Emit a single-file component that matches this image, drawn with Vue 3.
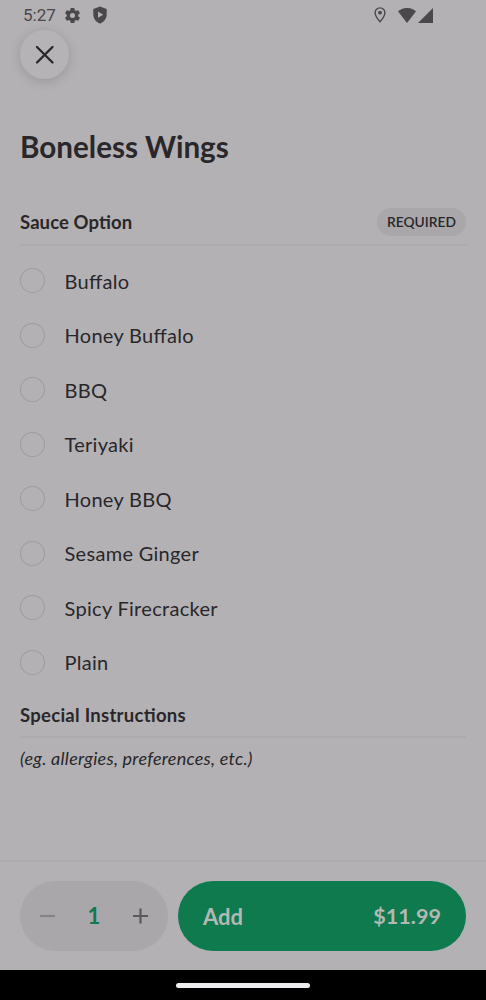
<template>
  <div class="screen">
    <!-- Status bar -->
    <div class="status-bar">
      <div class="status-left">
        <span class="time">5:27</span>
        <svg class="gear" width="19" height="19" viewBox="0 0 24 24">
          <path fill="currentColor" fill-rule="evenodd" d="M19.14 12.94c.04-.3.06-.61.06-.94 0-.32-.02-.64-.07-.94l2.03-1.58c.18-.14.23-.41.12-.61l-1.92-3.32c-.12-.22-.37-.29-.59-.22l-2.39.96c-.5-.38-1.03-.7-1.62-.94l-.36-2.54c-.04-.24-.24-.41-.48-.41h-3.84c-.24 0-.43.17-.47.41l-.36 2.54c-.59.24-1.13.57-1.62.94l-2.39-.96c-.22-.08-.47 0-.59.22L2.74 8.87c-.12.21-.08.47.12.61l2.03 1.58c-.05.3-.09.63-.09.94s.02.64.07.94l-2.03 1.58c-.18.14-.23.41-.12.61l1.92 3.32c.12.22.37.29.59.22l2.39-.96c.5.38 1.03.7 1.62.94l.36 2.54c.05.24.24.41.48.41h3.84c.24 0 .44-.17.47-.41l.36-2.54c.59-.24 1.13-.56 1.62-.94l2.39.96c.22.08.47 0 .59-.22l1.92-3.32c.12-.22.07-.47-.12-.61l-2.01-1.58zM12 15.2A3.2 3.2 0 1 1 12 8.8a3.2 3.2 0 0 1 0 6.4z" />
        </svg>
        <svg class="shield" width="14" height="18" viewBox="0 0 14 18">
          <path fill="currentColor" fill-rule="evenodd" d="M7 .4 13.7 3v5.400c0 4-2.800 7.700-6.700 9-3.900-1.300-6.700-5-6.700-9V3zM5 5.600v6.200L10.200 8.700z" />
        </svg>
      </div>
      <div class="status-right">
        <svg class="pin" width="12" height="16" viewBox="0 0 12 16">
          <path fill="none" stroke="currentColor" stroke-width="1.4" d="M6 .9a4.900 4.900 0 0 0-4.900 4.900C1.100 9.300 6 14.700 6 14.700s4.900-5.400 4.900-8.900A4.900 4.900 0 0 0 6 .9z" />
          <circle cx="6" cy="5.700" r="1.900" fill="currentColor" />
        </svg>
        <svg class="wifi" width="18" height="15" viewBox="0 0 18 15">
          <path fill="currentColor" d="M0 3.200C5.200-1.100 12.800-1.100 18 3.200L9 15z" />
        </svg>
        <svg class="signal" width="15" height="15" viewBox="0 0 15 15">
          <path fill="currentColor" d="M15 0v15H0z" />
        </svg>
      </div>
    </div>

    <button class="close-btn" aria-label="Close">
      <svg width="20" height="20" viewBox="0 0 20 20">
        <path d="M2 2l15.500 15.500M17.500 2L2 17.500" fill="none" stroke="currentColor" stroke-width="2.300" stroke-linecap="round" />
      </svg>
    </button>

    <!-- Item details -->
    <main class="content">
      <h1 class="title">Boneless Wings</h1>

      <div class="section-header">
        <h2 class="section-title">Sauce Option</h2>
        <span class="required">REQUIRED</span>
      </div>

      <div class="options">
        <div
          v-for="option in options"
          :key="option"
          class="option"
          @click="selected = option"
        >
          <span class="radio" :class="{ checked: selected === option }"></span>
          <span class="option-label">{{ option }}</span>
        </div>
      </div>

      <h2 class="section-title instructions-title">Special Instructions</h2>
      <p class="instructions">(eg. allergies, preferences, etc.)</p>
    </main>

    <!-- Bottom bar -->
    <footer class="footer">
      <div class="stepper">
        <button class="step minus" :disabled="quantity === 1" aria-label="Decrease" @click="quantity--">
          <svg width="15" height="16" viewBox="0 0 15 16">
            <path d="M0 8h15" stroke="currentColor" stroke-width="2.200" />
          </svg>
        </button>
        <span class="quantity">{{ quantity }}</span>
        <button class="step plus" aria-label="Increase" @click="quantity++">
          <svg width="15" height="16" viewBox="0 0 15 16">
            <path d="M0 8h15M7.500 .5v15" stroke="currentColor" stroke-width="2.200" />
          </svg>
        </button>
      </div>
      <button class="add-btn">
        <span>Add</span>
        <span class="total">${{ total }}</span>
      </button>
    </footer>

    <div class="nav-bar">
      <div class="nav-handle"></div>
    </div>
  </div>
</template>

<script setup>
import { ref, computed } from 'vue'

const options = [
  'Buffalo',
  'Honey Buffalo',
  'BBQ',
  'Teriyaki',
  'Honey BBQ',
  'Sesame Ginger',
  'Spicy Firecracker',
  'Plain'
]

const price = 11.99
const selected = ref('')
const quantity = ref(1)

const total = computed(() => (price * quantity.value).toFixed(2))
</script>

<style>
body {
  margin: 0;
  background-color: #b3b1b4;
}
</style>

<style scoped>
.screen {
  display: flex;
  flex-direction: column;
  width: 486px;
  height: 1000px;
  overflow: hidden;
  background-color: #b3b1b4;
  color: #29272a;
  font-family: Lato, "Liberation Sans", sans-serif;
  /* keep ligatures where letter-spacing is set */
  font-feature-settings: "liga" 1;
}

button {
  border: none;
  padding: 0;
  font-family: inherit;
  cursor: pointer;
}

/* Status bar */
.status-bar {
  display: flex;
  justify-content: space-between;
  box-sizing: border-box;
  height: 30px;
  padding: 0 53px 0 23px;
  color: #4a484b;
}

.status-left,
.status-right {
  display: flex;
  align-items: center;
}

.time {
  width: 40px;
  font-family: Roboto, sans-serif;
  font-size: 17px;
  line-height: 31px;
}

.shield {
  margin-left: 11px;
}

.wifi {
  margin-left: 12px;
}

.signal {
  margin-left: 2px;
}

.close-btn {
  display: flex;
  align-items: center;
  justify-content: center;
  flex: none;
  width: 49px;
  height: 49px;
  margin-left: 20px;
  border-radius: 50%;
  background-color: #b5b3b6;
  color: #29272a;
  box-shadow: 0 2px 12px rgba(0, 0, 0, 0.16);
}

/* Content */
.content {
  flex: 1;
  padding: 48px 19px 0 20px;
}

.title {
  margin: 0;
  font-size: 29.6px;
  line-height: 39px;
  font-weight: 700;
}

.section-header {
  display: flex;
  align-items: center;
  justify-content: space-between;
  box-sizing: border-box;
  height: 46px;
  margin-top: 34px;
  border-bottom: 2px solid #adabae;
}

.section-title {
  margin: 0;
  font-size: 18.5px;
  line-height: 24px;
  font-weight: 700;
  letter-spacing: 0.1px;
}

.required {
  box-sizing: border-box;
  width: 89px;
  height: 28px;
  margin-right: 1px;
  border-radius: 14px;
  background-color: #a9a7aa;
  font-size: 13.800px;
  line-height: 28px;
  font-weight: 600;
  text-align: center;
}

.options {
  padding-top: 7.500px;
}

.option {
  display: flex;
  align-items: center;
  height: 54.5px;
  cursor: pointer;
}

.radio {
  box-sizing: border-box;
  width: 24.5px;
  height: 25px;
  border: 1.500px solid #9d9b9e;
  border-radius: 50%;
}

.radio.checked {
  border: 7px solid #0e7a4e;
}

.option-label {
  margin-left: 20px;
  font-size: 20px;
  line-height: 26px;
  letter-spacing: 0.3px;
}

.instructions-title {
  margin-right: 1px;
  padding: 13px 0 9px;
  border-bottom: 2px solid #adabae;
  letter-spacing: 0.28px;
}

.instructions {
  margin: 8px 0 0;
  font-size: 18px;
  line-height: 24px;
  font-style: italic;
  letter-spacing: 0.24px;
}

/* Footer */
.footer {
  display: flex;
  align-items: flex-start;
  box-sizing: border-box;
  height: 110px;
  padding: 19px 20px 0;
  border-top: 2px solid #adabae;
}

.stepper {
  display: flex;
  align-items: center;
  justify-content: space-between;
  box-sizing: border-box;
  width: 148px;
  height: 69.5px;
  padding: 0 20px;
  border-radius: 35px;
  background-color: #a9a7aa;
}

.step {
  display: flex;
  width: 15px;
  background: none;
  color: #5b595c;
}

.step:disabled {
  color: #858386;
}

.quantity {
  color: #0e7a4e;
  font-size: 22px;
  line-height: 28px;
  font-weight: 700;
}

.add-btn {
  display: flex;
  align-items: center;
  justify-content: space-between;
  flex: 1;
  height: 69.5px;
  margin-left: 10px;
  padding: 1px 25px 0;
  border-radius: 35px;
  background-color: #0e7a4e;
  color: #b3b8b4;
  font-size: 22px;
  font-weight: 700;
}

.total {
  font-size: 21.6px;
}

/* System navigation */
.nav-bar {
  display: flex;
  justify-content: center;
  height: 30px;
  background-color: #000;
}

.nav-handle {
  width: 134px;
  height: 5px;
  margin-top: 12.500px;
  border-radius: 3px;
  background-color: #ececee;
}
</style>
